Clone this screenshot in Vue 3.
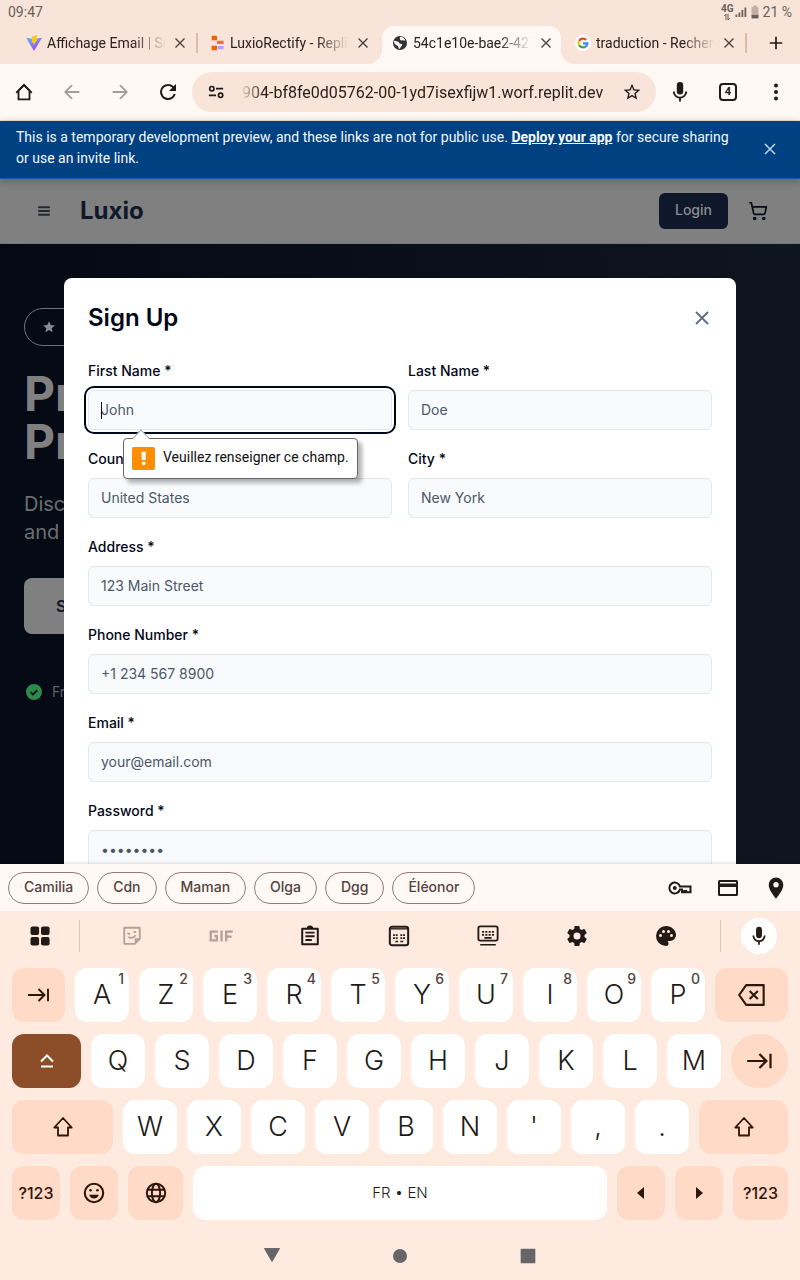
<script setup>
import { h, ref } from 'vue'

const glyphs = {
  close: '<path d="M6 6l12 12M18 6L6 18" fill="none" stroke="currentColor" stroke-width="1.8"/>',
  plus: '<path d="M12 4.500v15M4.500 12h15" fill="none" stroke="currentColor" stroke-width="2"/>',
  home: '<path d="M6 10.500L12 4.500l6 6V20H6z" fill="none" stroke="currentColor" stroke-width="2"/><path d="M3.500 13L12 4.300 20.500 13" fill="none" stroke="currentColor" stroke-width="2"/>',
  back: '<path d="M20 12H5M12 4.500L4.700 12l7.300 7.500" fill="none" stroke="currentColor" stroke-width="2"/>',
  forward: '<path d="M4 12h15M12 4.500l7.300 7.500-7.300 7.500" fill="none" stroke="currentColor" stroke-width="2"/>',
  reload: '<path d="M17.650 6.350A7.960 7.960 0 0 0 12 4a8 8 0 1 0 7.730 10h-2.080A6 6 0 1 1 12 6c1.660 0 3.140.690 4.220 1.780L13 11h7V4z" fill="currentColor"/>',
  tune: '<g fill="none" stroke="currentColor" stroke-width="2"><circle cx="7" cy="8" r="2.600"/><path d="M12 8h8.500M3.500 16H12"/><circle cx="17.500" cy="16" r="2.600"/></g>',
  star: '<path d="M22 9.240l-7.190-.620L12 2 9.190 8.630 2 9.240l5.460 4.730L5.820 21 12 17.270 18.180 21l-1.630-7.030zM12 15.400l-3.760 2.270 1-4.280-3.320-2.880 4.380-.380L12 6.100l1.710 4.040 4.380.380-3.320 2.880 1 4.280z" fill="currentColor"/>',
  starFull: '<path d="M12 17.270L18.180 21l-1.640-7.030L22 9.240l-7.190-.610L12 2 9.190 8.630 2 9.240l5.460 4.730L5.820 21z" fill="currentColor"/>',
  mic: '<path d="M12 14.500a3.200 3.200 0 0 0 3.200-3.200V5.200a3.200 3.200 0 0 0-6.400 0v6.100a3.200 3.200 0 0 0 3.200 3.200z" fill="currentColor"/><path d="M5.800 11.500a6.200 6.200 0 0 0 12.400 0M12 17.500V21.500" fill="none" stroke="currentColor" stroke-width="1.900"/>',
  more: '<g fill="currentColor"><circle cx="12" cy="5.500" r="2"/><circle cx="12" cy="12" r="2"/><circle cx="12" cy="18.500" r="2"/></g>',
  menu: '<path d="M5 7.500h14M5 12h14M5 16.500h14" fill="none" stroke="currentColor" stroke-width="2.200"/>',
  cart: '<g fill="none" stroke="currentColor" stroke-width="2" stroke-linecap="round" stroke-linejoin="round"><circle cx="8" cy="21" r="1.200"/><circle cx="19" cy="21" r="1.200"/><path d="M2.050 2.050h2l2.660 12.420a2 2 0 0 0 2 1.580h9.780a2 2 0 0 0 1.950-1.570l1.650-7.430H5.120"/></g>',
  check: '<circle cx="12" cy="12" r="12" fill="#2b8a4c"/><path d="M7 12.200l3.500 3.500 6.500-6.500" fill="none" stroke="#080d17" stroke-width="2.800"/>',
  vite: '<defs><linearGradient id="vg" x1="0" y1="0" x2=".6" y2="1"><stop offset="0" stop-color="#41c8ff"/><stop offset="1" stop-color="#b33cf5"/></linearGradient></defs><path d="M0 4l12 20L24 4l-12 2z" fill="url(#vg)"/><path d="M17 0L9 2l-.600 10 3-.600-.800 5L18 6l-3.200.600z" fill="#ffc61c"/>',
  replit: '<path d="M4 1h7a1 1 0 0 1 1 1v6H4z" fill="#f26207"/><path d="M12 8.500h9a1 1 0 0 1 1 1v4h-10z" fill="#f5702a"/><path d="M4 16h8v6a1 1 0 0 1-1 1H4z" fill="#f26207"/><path d="M13 16.500h9v5h-9z" fill="#b9a0ff"/>',
  globeDark: '<circle cx="12" cy="12" r="10.500" fill="#2f3235"/><path d="M3 9c3-1 4 1 6 1s1 3 4 3 3 2 1 4-1 3-3 4c-2-2-1-4-3-5s-5-2-5-7zM12 3c3-1 7 2 8 5-2 1-3-1-5 0s-4-1-3-5z" fill="#fff8f5"/>',
  google: '<circle cx="12" cy="12" r="12" fill="#fff"/><g fill="none" stroke-width="3.200"><path d="M16.800 7.500A6.600 6.600 0 0 0 6.200 8.800" stroke="#ea4335"/><path d="M6.200 8.800a6.600 6.600 0 0 0 0 6.400" stroke="#fbbc05"/><path d="M6.200 15.200a6.600 6.600 0 0 0 10 1.800" stroke="#34a853"/><path d="M16.200 17a6.600 6.600 0 0 0 2.400-4.500H12" stroke="#4285f4"/></g>',
  signal: '<path d="M1 22v-5h3.500v5zM7 22v-9h3.500v9zM13 22V8h3.500v14zM19 22V3h3.500v19z" fill="currentColor"/>',
  battery: '<path d="M9 1h6v3h3v13H6V4h3z" fill="currentColor" opacity=".4"/><path d="M6 17h12v6H6z" fill="currentColor"/>',
  updown: '<path d="M9 22V3L4 9M15 2v19l5-6" fill="none" stroke="currentColor" stroke-width="3"/>',
  key: '<g fill="none" stroke="currentColor" stroke-width="2"><path d="M11.900 10.400A5.400 5.400 0 1 0 11.900 13.600H14v2.700h2.200v-1.400h2v1.400H22.500v-5.900z"/></g><circle cx="6.800" cy="12" r="2" fill="currentColor"/>',
  card: '<path d="M3.500 4h17A1.500 1.500 0 0 1 22 5.500v13a1.500 1.500 0 0 1-1.500 1.500h-17A1.500 1.500 0 0 1 2 18.500v-13A1.500 1.500 0 0 1 3.500 4zM4 6v1.500h16V6zm0 5v7h16v-7z" fill="currentColor" fill-rule="evenodd"/>',
  pin: '<path d="M12 1.500A7.300 7.300 0 0 0 4.700 9c0 5.500 7.300 13.500 7.300 13.500S19.300 14.500 19.300 9A7.300 7.300 0 0 0 12 1.500zm0 10a2.700 2.700 0 1 1 0-5.400 2.700 2.700 0 0 1 0 5.400z" fill="currentColor"/>',
  apps: '<g fill="currentColor"><rect x="2.500" y="2.500" width="8.600" height="8.600" rx="2"/><rect x="13" y="2.500" width="8.600" height="8.600" rx="2"/><rect x="2.500" y="13" width="8.600" height="8.600" rx="2"/><rect x="13" y="13" width="8.600" height="8.600" rx="2"/></g>',
  sticker: '<path d="M4 3h16a.500.500 0 0 1 .500.500V15l-5.500 5.500H4a.500.500 0 0 1-.500-.500v-16.500A.500.500 0 0 1 4 3z" fill="none" stroke="currentColor" stroke-width="2"/><path d="M21 14.500h-6V21z" fill="currentColor"/><path d="M7 9.500h3M13.500 7.500h3M8 13c3 1.800 6 1 8-1.800" fill="none" stroke="currentColor" stroke-width="2"/>',
  clipboard: '<path d="M3.500 4h17v17h-17z" fill="none" stroke="currentColor" stroke-width="2.200" stroke-linejoin="round"/><path d="M8.500 4a3.500 3.500 0 0 1 7 0z" fill="currentColor"/><path d="M7 8.300h10M7 12.300h10M7 16.300h7" stroke="currentColor" stroke-width="2.100"/>',
  onehand: '<rect x="2" y="2" width="20" height="20" rx="2.500" fill="none" stroke="currentColor" stroke-width="2.200"/><path d="M3 4.200h18" stroke="currentColor" stroke-width="1.500"/><path d="M5.500 11h2m1 0h2m3 0h2m1 0h2M5.500 14.300h2m1 0h2m3 0h2m1 0h2M8 18h3m2.500 0h3" stroke="currentColor" stroke-width="1.900"/>',
  keyboard: '<rect x="1.500" y="1.500" width="21" height="15.500" rx="2" fill="none" stroke="currentColor" stroke-width="2"/><path d="M5.500 7.500h13M5.500 10.800h13" stroke="currentColor" stroke-width="2" stroke-dasharray="2.200 1.400"/><path d="M8 14h8M3.500 21.500h17" stroke="currentColor" stroke-width="1.800"/>',
  gear: '<path d="M19.430 12.980c.040-.320.070-.640.070-.980s-.030-.660-.070-.980l2.110-1.650a.500.500 0 0 0 .120-.640l-2-3.460a.500.500 0 0 0-.610-.220l-2.490 1a7.300 7.300 0 0 0-1.690-.980l-.380-2.650A.490.490 0 0 0 14 2h-4a.490.490 0 0 0-.490.420l-.380 2.650c-.610.250-1.170.590-1.690.980l-2.490-1a.500.500 0 0 0-.610.220l-2 3.460a.500.500 0 0 0 .120.640l2.110 1.650a7.900 7.900 0 0 0 0 1.960l-2.110 1.650a.500.500 0 0 0-.120.640l2 3.460c.120.220.390.300.610.220l2.490-1c.520.400 1.080.730 1.690.980l.380 2.650c.030.240.240.420.490.420h4c.250 0 .460-.180.490-.420l.380-2.650a7.700 7.700 0 0 0 1.690-.980l2.490 1c.230.090.490 0 .610-.220l2-3.460a.500.500 0 0 0-.120-.640zM12 15.500a3.500 3.500 0 1 1 0-7 3.500 3.500 0 0 1 0 7z" fill="currentColor"/>',
  palette: '<path d="M12 2a10 10 0 0 0 0 20 2.500 2.500 0 0 0 2.500-2.500c0-.610-.230-1.200-.640-1.670a.500.500 0 0 1 .370-.830H16a6 6 0 0 0 6-6c0-4.960-4.490-9-10-9zM6.500 13a1.500 1.500 0 1 1 0-3 1.500 1.500 0 0 1 0 3zm3-4a1.500 1.500 0 1 1 0-3 1.500 1.500 0 0 1 0 3zm5 0a1.500 1.500 0 1 1 0-3 1.500 1.500 0 0 1 0 3zm3 4a1.500 1.500 0 1 1 0-3 1.500 1.500 0 0 1 0 3z" fill="currentColor"/>',
  tab: '<path d="M1 12h16M11.500 6l6 6-6 6M21 5.800v12.400" fill="none" stroke="currentColor" stroke-width="1.900"/>',
  backspace: '<path d="M7 3.500h15V20.500H7L1 12z" fill="none" stroke="currentColor" stroke-width="1.800" stroke-linejoin="round"/><path d="M10 8.500l7 7M17 8.500l-7 7" stroke="currentColor" stroke-width="1.800"/>',
  caps: '<path d="M6 12.500l6-6 6 6M6 17.500h12" fill="none" stroke="currentColor" stroke-width="2"/>',
  shift: '<path d="M12 3l8.700 9.500H17V20.500H7V12.500H3.300z" fill="none" stroke="currentColor" stroke-width="1.800" stroke-linejoin="round"/>',
  smile: '<circle cx="12" cy="12" r="8.500" fill="none" stroke="currentColor" stroke-width="1.900"/><circle cx="8.800" cy="9.500" r="1.200" fill="currentColor"/><circle cx="15.200" cy="9.500" r="1.200" fill="currentColor"/><path d="M7.500 13.700h9a4.700 4.700 0 0 1-9 0z" fill="currentColor"/>',
  globe: '<g fill="none" stroke="currentColor" stroke-width="1.800"><circle cx="12" cy="12" r="8.500"/><ellipse cx="12" cy="12" rx="3.800" ry="8.500"/><path d="M4 9h16M4 15h16"/></g>',
  left: '<path d="M15 6v12l-7-6z" fill="currentColor"/>',
  right: '<path d="M9 6v12l7-6z" fill="currentColor"/>',
  navBack: '<path d="M4.500 4.500h15l-7.500 13z" fill="currentColor" stroke="currentColor" stroke-linejoin="round"/>',
  navHome: '<circle cx="12" cy="12" r="7" fill="currentColor"/>',
  navRecent: '<rect x="4" y="4" width="16" height="16" rx="1" fill="currentColor"/>',
  gif: '<g fill="none" stroke="currentColor" stroke-width="2.100"><path d="M9 8H2.500v8h5.700v-4H6M12.500 7v10M16.800 17V8h6M16.800 12.500h5"/></g>',
  bang: '<path d="M2 0h20a2 2 0 0 1 2 2v20a2 2 0 0 1-2 2H2a2 2 0 0 1-2-2V2a2 2 0 0 1 2-2z" fill="#ff8d00"/><path d="M9.800 5h4.800l-.400 8.500h-4z" fill="#fff"/><circle cx="12.200" cy="17" r="2" fill="#fff"/>'
}

const Icon = ({ name, size = 24 }) =>
  h('svg', { viewBox: '0 0 24 24', width: size, height: size, 'aria-hidden': 'true', innerHTML: glyphs[name] })
Icon.props = ['name', 'size']

const tabs = [
  { icon: 'vite', title: 'Affichage Email | Serveur', sep: true },
  { icon: 'replit', title: 'LuxioRectify - Replit' },
  { icon: 'globeDark', title: '54c1e10e-bae2-4279', active: true },
  { icon: 'google', title: 'traduction - Recherche', sep: true }
]

const url = ref('904-bf8fe0d05762-00-1yd7isexfijw1.worf.replit.dev')

const fields = [
  { id: 'first', label: 'First Name *', hint: 'John', half: true, focus: true },
  { id: 'last', label: 'Last Name *', hint: 'Doe', half: true },
  { id: 'country', label: 'Country *', hint: 'United States', half: true },
  { id: 'city', label: 'City *', hint: 'New York', half: true },
  { id: 'address', label: 'Address *', hint: '123 Main Street' },
  { id: 'phone', label: 'Phone Number *', hint: '+1 234 567 8900', type: 'tel' },
  { id: 'email', label: 'Email *', hint: 'your@email.com', type: 'email' },
  { id: 'password', label: 'Password *', hint: '••••••••', type: 'password' }
]

const chips = ['Camilia', 'Cdn', 'Maman', 'Olga', 'Dgg', 'Éléonor']

const tools = [
  { icon: 'sticker', label: 'Stickers', off: true },
  { icon: 'gif', label: 'GIF', off: true },
  { icon: 'clipboard', label: 'Clipboard' },
  { icon: 'onehand', label: 'Floating' },
  { icon: 'keyboard', label: 'Layout' },
  { icon: 'gear', label: 'Settings', size: 24 },
  { icon: 'palette', label: 'Theme', size: 24 }
]

const letters = (s) => [...s].map((t) => ({ t, w: 54 }))
const rows = [
  [{ icon: 'tab', w: 53 }, ...letters('AZERTYUIOP').map((k, i) => ({ ...k, alt: String((i + 1) % 10) })), { icon: 'backspace', w: 73, size: 28 }],
  [{ icon: 'caps', w: 69, dark: true }, ...letters('QSDFGHJKLM'), { icon: 'tab', w: 57, round: true, size: 28 }],
  [{ icon: 'shift', w: 101 }, ...letters("WXCVBN',."), { icon: 'shift', w: 89 }],
  [
    { sym: '?123', w: 48 },
    { icon: 'smile', w: 48, size: 26 },
    { icon: 'globe', w: 55, size: 26 },
    { space: 'FR • EN', w: 414 },
    { icon: 'left', w: 48 },
    { icon: 'right', w: 48 },
    { sym: '?123', w: 55 }
  ]
]
</script>

<template>
  <div class="device">
    <header class="status">
      <span>09:47</span>
      <span class="status-right">
        <span class="net"><b>4G</b><Icon name="updown" :size="8" /></span>
        <Icon name="signal" :size="12" />
        <Icon name="battery" :size="14" />
        <span>21 %</span>
      </span>
    </header>

    <nav class="tabs">
      <div v-for="t in tabs" :key="t.title" class="tab" :class="{ active: t.active, sep: t.sep }">
        <Icon :name="t.icon" :size="16" />
        <span class="tab-title">{{ t.title }}</span>
        <button class="tab-close" aria-label="Close tab"><Icon name="close" :size="18" /></button>
      </div>
      <button class="new-tab" aria-label="New tab"><Icon name="plus" :size="20" /></button>
    </nav>

    <div class="toolbar">
      <button class="tool" aria-label="Home"><Icon name="home" :size="22" /></button>
      <button class="tool dim" aria-label="Back"><Icon name="back" :size="22" /></button>
      <button class="tool dim" aria-label="Forward"><Icon name="forward" :size="22" /></button>
      <button class="tool" aria-label="Reload"><Icon name="reload" /></button>
      <div class="omnibox">
        <button class="tool" aria-label="Site settings"><Icon name="tune" :size="20" /></button>
        <input v-model="url" class="url" type="text" aria-label="Address" />
        <button class="tool" aria-label="Bookmark"><Icon name="star" :size="20" /></button>
      </div>
      <button class="tool" aria-label="Voice search"><Icon name="mic" /></button>
      <button class="tool" aria-label="Tabs"><span class="count">4</span></button>
      <button class="tool" aria-label="More"><Icon name="more" /></button>
    </div>

    <aside class="banner">
      <p>This is a temporary development preview, and these links are not for public use. <a href="#">Deploy your app</a> for secure sharing or use an invite link.</p>
      <button aria-label="Dismiss"><Icon name="close" :size="20" /></button>
    </aside>

    <main class="page">
      <div class="site-head">
        <button class="burger" aria-label="Menu"><Icon name="menu" :size="20" /></button>
        <span class="brand">Luxio</span>
        <button class="login">Login</button>
        <button class="cart" aria-label="Cart"><Icon name="cart" :size="20" /></button>
      </div>
      <section class="hero">
        <div class="pill"><Icon name="starFull" :size="14" /></div>
        <h1>Premium<br />Products</h1>
        <p class="lead">Discover<br />and shop</p>
        <button class="shop">Shop</button>
        <div class="perk"><Icon name="check" :size="16" /><span>Free</span></div>
      </section>

      <div class="overlay">
        <form class="modal" @submit.prevent>
          <div class="modal-head">
            <h2>Sign Up</h2>
            <button type="button" aria-label="Close"><Icon name="close" :size="24" /></button>
          </div>
          <div class="grid">
            <div v-for="f in fields" :key="f.id" class="field" :class="{ half: f.half, focus: f.focus }">
              <label :for="f.id">{{ f.label }}</label>
              <div class="box">
                <input :id="f.id" :type="f.type || 'text'" :placeholder="f.hint" />
              </div>
              <div v-if="f.focus" class="bubble" role="alert">
                <Icon name="bang" :size="23" />
                <span>Veuillez renseigner ce champ.</span>
              </div>
            </div>
          </div>
        </form>
      </div>
    </main>

    <section class="keyboard">
      <div class="suggest">
        <button v-for="c in chips" :key="c" class="chip">{{ c }}</button>
        <span class="fill"></span>
        <button class="tool" aria-label="Passwords"><Icon name="key" /></button>
        <button class="tool" aria-label="Payment"><Icon name="card" /></button>
        <button class="tool" aria-label="Addresses"><Icon name="pin" /></button>
      </div>
      <div class="kbar">
        <button class="kside" aria-label="Apps"><Icon name="apps" /></button>
        <div class="ktools">
          <button v-for="t in tools" :key="t.icon" :aria-label="t.label" :class="{ off: t.off }">
            <Icon :name="t.icon" :size="t.icon === 'gif' ? 26 : t.size || 22" />
          </button>
        </div>
        <button class="kside last" aria-label="Dictate"><span class="dictate"><Icon name="mic" :size="22" /></span></button>
      </div>
      <div class="keys">
        <div v-for="(row, r) in rows" :key="r" class="row">
          <button
            v-for="(k, i) in row"
            :key="i"
            class="k"
            :class="{ special: k.icon || k.sym, dark: k.dark, round: k.round, sym: k.sym, space: k.space }"
            :style="{ flexGrow: k.w }"
            :aria-label="k.icon"
          >
            <Icon v-if="k.icon" :name="k.icon" :size="k.size || 24" />
            <template v-else>{{ k.t || k.sym || k.space }}</template>
            <span v-if="k.alt" class="alt">{{ k.alt }}</span>
          </button>
        </div>
      </div>
      <nav class="sysnav">
        <button aria-label="Back"><Icon name="navBack" /></button>
        <button aria-label="Home"><Icon name="navHome" /></button>
        <button aria-label="Recent apps"><Icon name="navRecent" :size="22" /></button>
      </nav>
    </section>
  </div>
</template>

<style>
body {
  margin: 0;
}
</style>

<style scoped>
* {
  box-sizing: border-box;
}
.device {
  display: flex;
  flex-direction: column;
  height: 100vh;
  overflow: hidden;
  background: #f9e4d9;
  color: #211a16;
  font-family: Roboto, "Liberation Sans", sans-serif;
}
button {
  display: flex;
  align-items: center;
  justify-content: center;
  padding: 0;
  border: 0;
  background: none;
  color: inherit;
  font: inherit;
}
svg {
  display: block;
  flex: none;
}
.status {
  display: flex;
  align-items: center;
  justify-content: space-between;
  height: 24px;
  padding: 0 8px;
  color: #6a5f59;
  font-size: 14px;
}
.status-right {
  display: flex;
  align-items: center;
  gap: 1px;
}
.net {
  display: flex;
  flex-direction: column;
  align-items: center;
  font-size: 10px;
  line-height: 9px;
}
.tabs {
  display: grid;
  grid-template-columns: repeat(4, 1fr) 52px;
  height: 40px;
  padding: 2px 0 0 16px;
}
.tab {
  position: relative;
  display: flex;
  align-items: center;
  min-width: 0;
  padding: 0 5px 4px 10px;
  color: #2b211c;
}
.tab-title {
  flex: 1;
  min-width: 0;
  margin-left: 5px;
  overflow: hidden;
  font-size: 14px;
  line-height: 20px;
  white-space: nowrap;
  mask-image: linear-gradient(to right, #000 72%, transparent 100%);
}
.tab-close {
  width: 28px;
  height: 28px;
  color: #4b413b;
}
.tab.sep::before {
  content: "";
  position: absolute;
  top: 7px;
  right: 1px;
  width: 2px;
  height: 20px;
  background: #dfbca8;
}
.tab.active {
  margin-right: 4px;
  padding-right: 1px;
  border-radius: 12px 12px 0 0;
  background: #fff8f5;
}
.tab.active::before,
.tab.active::after {
  content: "";
  position: absolute;
  bottom: 0;
  width: 14px;
  height: 14px;
}
.tab.active::before {
  left: -14px;
  background: radial-gradient(circle at 0 0, transparent 14px, #fff8f5 14px);
}
.tab.active::after {
  right: -14px;
  background: radial-gradient(circle at 100% 0, transparent 14px, #fff8f5 14px);
}
.new-tab {
  padding: 0 0 4px 4px;
}
.toolbar {
  display: flex;
  align-items: center;
  padding: 8px 0;
  border-bottom: 1px solid #ece0da;
  background: #fff8f5;
}
.tool {
  flex: none;
  width: 48px;
  height: 40px;
}
.dim {
  color: #a69e9a;
}
.omnibox {
  display: flex;
  flex: 1;
  min-width: 0;
  border-radius: 20px;
  background: #f9e4d9;
}
.url {
  flex: 1;
  min-width: 0;
  padding: 0 0 0 2px;
  border: 0;
  outline: 0;
  background: none;
  color: #2b211c;
  font: 16px Roboto, "Liberation Sans", sans-serif;
  mask-image: linear-gradient(to right, transparent 0, #000 24px);
}
.count {
  width: 18px;
  height: 18px;
  border: 2px solid #211a16;
  border-radius: 4px;
  font-size: 11px;
  font-weight: 700;
  line-height: 14px;
}
.banner {
  position: relative;
  z-index: 2;
  display: flex;
  align-items: center;
  padding: 0 14px 0 16px;
  border-bottom: 1px solid #1c5c9e;
  background: #004182;
  box-shadow: 0 2px 8px rgba(0, 0, 0, 0.25);
  color: #f5f9fc;
}
.banner p {
  flex: 1;
  margin: 0;
  padding: 6px 16px 9px 0;
  font-size: 14px;
  line-height: 21px;
}
.banner a {
  color: inherit;
  font-weight: 700;
}
.banner button {
  width: 32px;
  height: 32px;
  padding-bottom: 2px;
  color: #c2d5e8;
}
.page {
  position: relative;
  display: flex;
  flex: 1;
  flex-direction: column;
  min-height: 0;
  overflow: hidden;
  font-family: Inter, Roboto, sans-serif;
}
.site-head {
  display: flex;
  flex: none;
  align-items: center;
  height: 65px;
  padding: 0 22px 0 24px;
  border-bottom: 1px solid #72757a;
  background: #808080;
  color: #0f1729;
}
.burger {
  width: 40px;
  height: 40px;
  color: #23272f;
}
.brand {
  flex: 1;
  margin-left: 16px;
  padding-bottom: 2px;
  font-size: 24px;
  font-weight: 700;
}
.login {
  height: 36px;
  padding: 0 16px 3px;
  border-radius: 6px;
  background: #0f172a;
  color: #8a8c90;
  font-size: 14px;
  font-weight: 500;
}
.cart {
  width: 40px;
  height: 40px;
  margin-left: 10px;
  color: #060a14;
}
.hero {
  display: flex;
  flex: 1;
  flex-direction: column;
  align-items: flex-start;
  min-height: 0;
  padding: 64px 24px 0;
  background: linear-gradient(to right, #040914, #0f151e);
  color: #808080;
}
.pill {
  display: flex;
  flex: none;
  align-items: center;
  width: 160px;
  height: 38px;
  padding-left: 17px;
  border: 1px solid #6e7177;
  border-radius: 19px;
  color: #8a8c90;
}
h1 {
  margin: 24px 0 0;
  font-size: 48px;
  font-weight: 700;
  line-height: 48px;
}
.lead {
  margin: 24px 0 0;
  color: #6b6e74;
  font-size: 20px;
  line-height: 28px;
}
.shop {
  flex: none;
  height: 56px;
  margin-top: 32px;
  padding: 0 32px;
  border-radius: 8px;
  background: #808080;
  color: #0f172a;
  font-size: 16px;
  font-weight: 600;
}
.perk {
  display: flex;
  align-items: center;
  gap: 10px;
  margin: 48px 0 0 2px;
  color: #5c6067;
  font-size: 14px;
  line-height: 20px;
}
.overlay {
  position: absolute;
  inset: 99px 0 auto;
  display: flex;
  justify-content: center;
}
.modal {
  width: 84%;
  padding: 24px;
  border-radius: 8px;
  background: #fff;
  color: #020817;
}
.modal-head {
  display: flex;
  align-items: center;
  justify-content: space-between;
  height: 32px;
  margin-bottom: 28px;
}
h2 {
  margin: 0;
  padding-bottom: 2px;
  font-size: 24px;
  font-weight: 600;
}
.modal-head button {
  width: 20px;
  color: #5f6b7e;
}
.grid {
  display: grid;
  grid-template-columns: 1fr 1fr;
  gap: 20px 16px;
}
.field {
  position: relative;
  grid-column: span 2;
}
.field.half {
  grid-column: span 1;
}
.field label {
  display: block;
  margin-bottom: 10px;
  font-size: 14px;
  font-weight: 500;
  line-height: 18px;
}
.box {
  position: relative;
}
.box input {
  display: block;
  width: 100%;
  height: 40px;
  padding: 0 12px 2px;
  border: 1px solid #e1e8f0;
  border-radius: 6px;
  outline: 0;
  background: #f8fafc;
  color: #020817;
  font: 14px Inter, Roboto, sans-serif;
}
.box input::placeholder {
  color: #4b586a;
  opacity: 1;
}
.focus {
  z-index: 1;
}
.focus input {
  box-shadow: 0 0 0 2px #fff, 0 0 0 4px #020817;
}
.focus .box::after {
  content: "";
  position: absolute;
  top: 12px;
  left: 13px;
  width: 1px;
  height: 17px;
  background: #020817;
}
.bubble {
  position: absolute;
  top: 76px;
  left: 35px;
  display: flex;
  gap: 8px;
  height: 41px;
  padding: 8px;
  border: 1px solid #666;
  border-radius: 4px;
  background: #fff;
  box-shadow: 4px 4px 4px rgba(0, 0, 0, 0.3);
  color: #111;
  font: 14px/21px Roboto, sans-serif;
  white-space: nowrap;
}
.bubble::before {
  content: "";
  position: absolute;
  top: -7px;
  left: 11px;
  width: 11px;
  height: 11px;
  border: solid #aaa;
  border-width: 1px 0 0 1px;
  background: #fff;
  transform: rotate(45deg);
}
.keyboard {
  position: relative;
  z-index: 2;
  flex: none;
  background: #ffeadf;
  box-shadow: 0 0 4px rgba(0, 0, 0, 0.2);
}
.suggest {
  display: flex;
  align-items: center;
  gap: 8px;
  height: 47px;
  padding-left: 8px;
  background: #fff8f5;
}
.suggest .tool {
  margin-left: -8px;
}
.fill {
  flex: 1;
}
.chip {
  height: 32px;
  padding: 0 15px 2px;
  border: 1px solid #8f7c75;
  border-radius: 16px;
  color: #52443d;
  font: 500 14px Inter, Roboto, sans-serif;
}
.kbar {
  display: flex;
  align-items: center;
  height: 50px;
}
.kside {
  width: 80px;
  height: 32px;
  border-right: 1px solid #d8c5bb;
}
.kside.last {
  border-right: 0;
  border-left: 1px solid #d8c5bb;
  padding-right: 3px;
}
.dictate {
  display: grid;
  width: 36px;
  height: 36px;
  flex: none;
  place-items: center;
  border-radius: 50%;
  background: #fff;
}
.ktools {
  display: flex;
  flex: 1;
  padding: 0 10px 0 7px;
}
.ktools button {
  flex: 1;
}
.ktools .off {
  color: #b1a198;
}
.keys {
  display: flex;
  flex-direction: column;
  gap: 12px;
  padding: 7px 12px 0;
}
.row {
  display: flex;
  gap: 10px;
}
.k {
  position: relative;
  flex: 1 1 0;
  min-width: 0;
  height: 54px;
  padding-bottom: 1px;
  border-radius: 12px;
  background: #fff;
  color: #211a16;
  font: 300 27px Inter, Roboto, sans-serif;
}
.k.special {
  padding-bottom: 0;
  background: #ffdac7;
  color: #2d160a;
}
.k.dark {
  background: #8b4e28;
  color: #fff;
}
.k.round {
  border-radius: 28px;
}
.k.sym {
  font-size: 16px;
  font-weight: 500;
}
.k.space {
  font-size: 15px;
}
.alt {
  position: absolute;
  top: 2px;
  right: 5px;
  color: #52443d;
  font-size: 14px;
  font-weight: 500;
  line-height: 17px;
}
.sysnav {
  display: flex;
  justify-content: center;
  gap: 104px;
  height: 60px;
  padding-top: 12px;
  color: #666;
}
.sysnav button {
  width: 24px;
}
</style>
